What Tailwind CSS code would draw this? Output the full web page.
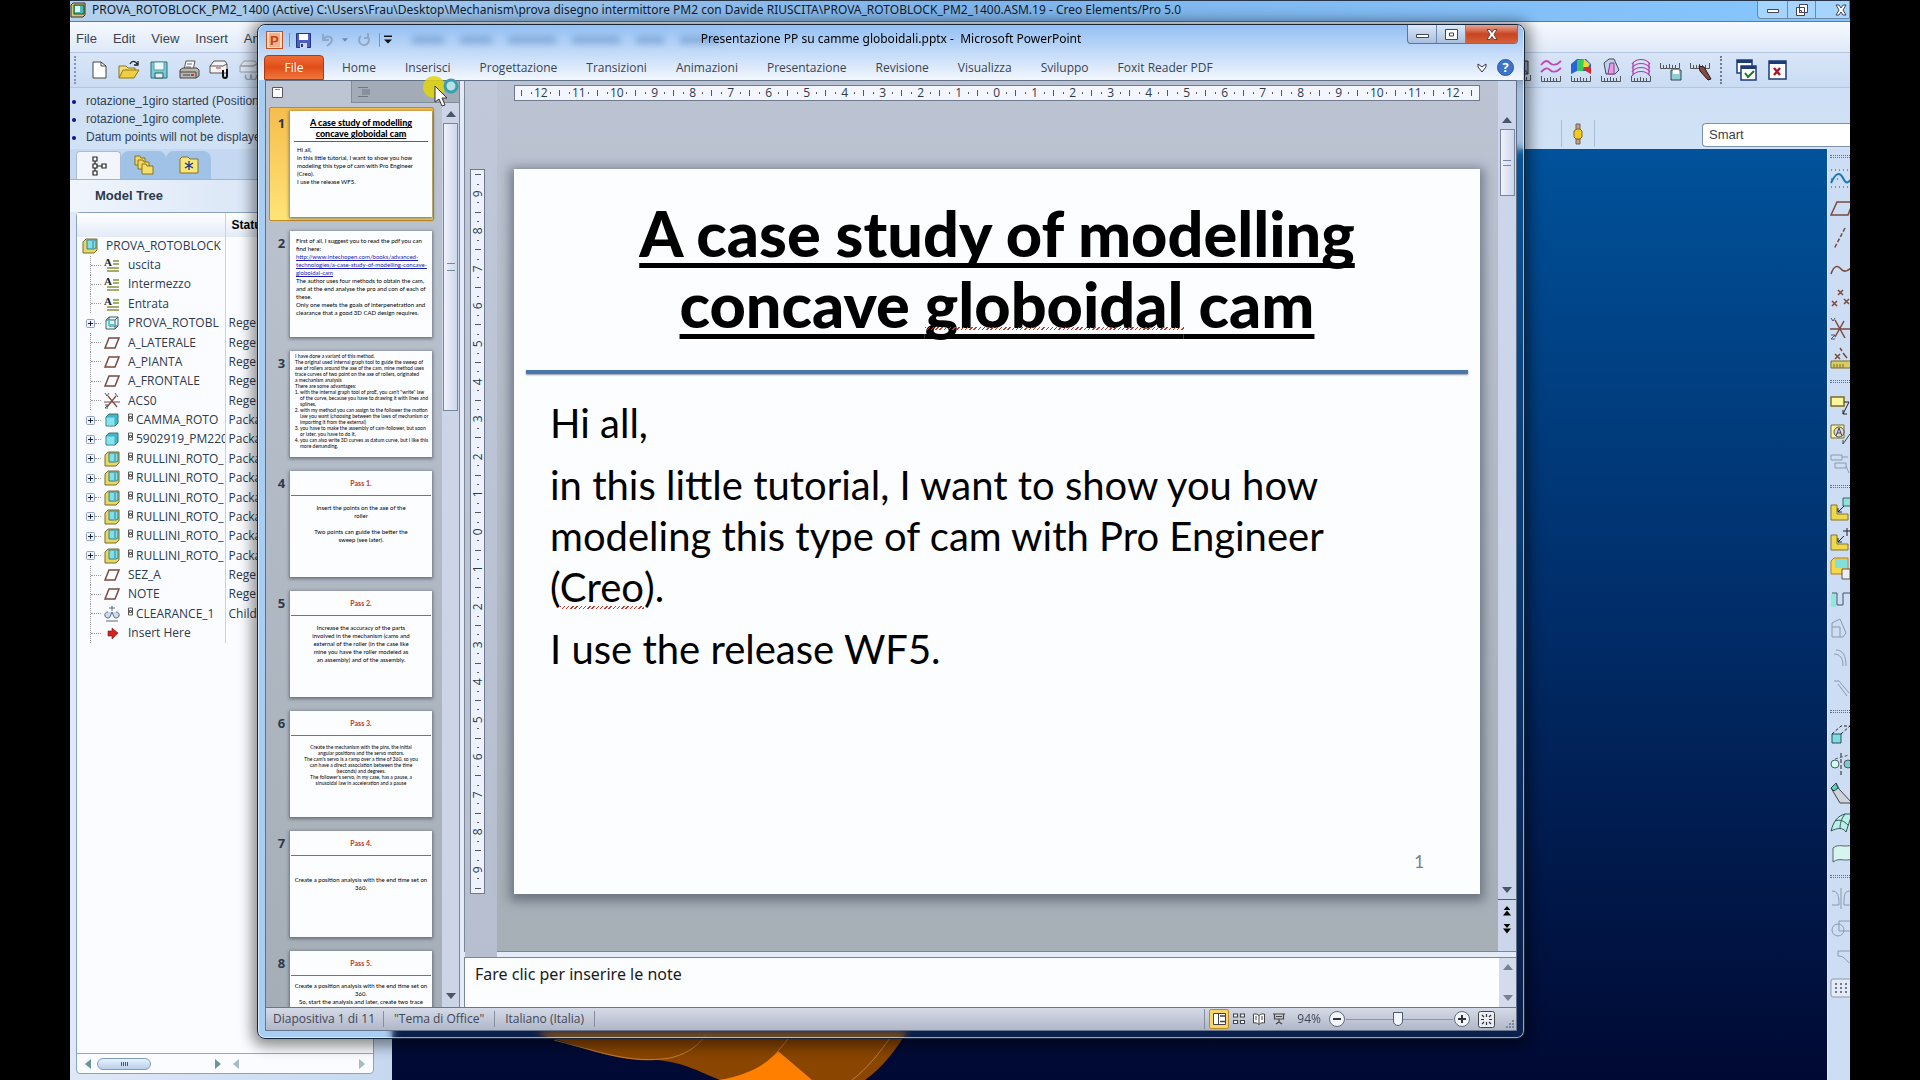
<!DOCTYPE html>
<html lang="it">
<head>
    <meta charset="UTF-8">
    <meta name="viewport" content="width=device-width, initial-scale=1.0">
    <title>Presentazione PP su camme globoidali.pptx - Microsoft PowerPoint</title>
    <script src="https://cdn.jsdelivr.net/npm/@tailwindcss/browser@4"></script>
</head>
<body class="relative h-screen overflow-hidden bg-black px-[70px] font-['Open_Sans',sans-serif] text-xs text-[#2c3a4c]">

    <!-- Shared icons -->
    <svg class="hidden">
        <symbol id="note" viewBox="0 0 16 16"><text x="0" y="9" font-family="Liberation Serif" font-weight="bold" font-size="11" fill="#222">A</text><path d="M9 4h6M9 7h6M3 11h12M3 14h12" stroke="#8a9138" stroke-width="1.5"/></symbol>
        <symbol id="plane" viewBox="0 0 16 16"><path d="M5 3h10l-4 10H1z" fill="none" stroke="#7a4a3a" stroke-width="1.5"/></symbol>
        <symbol id="csys" viewBox="0 0 16 16"><path d="M0 9h16M4 3l9 11M12 3L3 14" stroke="#7a4a3a" stroke-width="1.2"/><path d="M1 0l2 3 2-3M11 0l3 4M1 12h3l-3 3h3" fill="none" stroke="#555"/></symbol>
        <symbol id="part" viewBox="0 0 16 16"><path d="M2 5l3-3h9v9l-3 3H2z" fill="#3fb6cc" stroke="#476" stroke-width="1"/><path d="M2.500 5.500h8v8h-8z" fill="#86e3f0"/></symbol>
        <symbol id="asm" viewBox="0 0 16 16"><path d="M1 4l3-3h11v11l-3 3H1z" fill="#e8d864" stroke="#7b6a28"/><path d="M5 2h9v8l-2 1H5z" fill="#7fe0ec" stroke="#3b7f8a"/><path d="M11 3v7" stroke="#3b7f8a"/></symbol>
        <symbol id="skel" viewBox="0 0 16 16"><path d="M2 5l3-3h9v9l-3 3H2zM2 5h9v9M11 5l3-3M5 2v9h9" fill="#e4fbfd" stroke="#3f5f66"/><path d="M5 5v5h6" fill="none" stroke="#54cbd8" stroke-width="2"/></symbol>
        <symbol id="clear" viewBox="0 0 16 16"><path d="M4 6a3 3 0 1 0 2 5l2-5 2 5a3 3 0 1 0 2-5M5 2h6M8 0v5M2 15h12" fill="#cdd9ee" stroke="#5b6a85"/></symbol>
        <symbol id="here" viewBox="0 0 16 16"><path d="M4 6h4V3l6 5-6 6v-3H4z" fill="#d8201c" stroke="#7d1512" stroke-width=".6"/></symbol>
        <symbol id="plus" viewBox="0 0 9 9"><rect x=".5" y=".5" width="8" height="8" rx="1" fill="#eef2fa" stroke="#8fa4be"/><path d="M2 4.500h5M4.500 2v5" stroke="#223"/></symbol>
        <symbol id="box" viewBox="0 0 6 10"><path d="M.5 1h4v7h-4zM1.500 3.500h2v2h-2z" fill="none" stroke="#444" stroke-width=".9"/></symbol>
        <symbol id="up" viewBox="0 0 10 6"><path d="M0 6L5 0l5 6z" fill="currentColor"/></symbol>
        <symbol id="down" viewBox="0 0 10 6"><path d="M0 0h10L5 6z" fill="currentColor"/></symbol>
        <symbol id="left" viewBox="0 0 6 10"><path d="M6 0v10L0 5z" fill="currentColor"/></symbol>
        <symbol id="right" viewBox="0 0 6 10"><path d="M0 0v10l6-5z" fill="currentColor"/></symbol>
        <symbol id="scale" viewBox="0 0 20 6"><path d="M.5 0v5.500h19V0M3.500 2v3M6.500 2v3M9.500 1v4M12.500 2v3M15.500 2v3" fill="none" stroke="#555"/></symbol>
    </svg>

    <!-- Creo window -->
    <div class="flex h-full flex-col bg-[#cddff5]">
        <header class="flex h-[21px] shrink-0 items-center gap-1.5 overflow-hidden border-t border-[#26364a] bg-linear-to-r from-[#b4d0ec] via-[#7fb4ea] to-[#86c6ff] pb-0.5 text-[#101c2c]">
            <svg class="h-4 w-4 shrink-0" viewBox="0 0 16 16"><path d="M1 3l2-2h12v12l-2 2H1z" fill="#d9c95c" stroke="#334"/><path d="M4 3h10v9H4z" fill="#48bcb8" stroke="#243"/><path d="M5 4h5v6H5z" fill="#dff"/></svg>
            <h1 class="whitespace-nowrap font-['Noto_Sans',sans-serif] text-xs leading-4">PROVA_ROTOBLOCK_PM2_1400 (Active) C:\Users\Frau\Desktop\Mechanism\prova disegno intermittore PM2 con Davide RIUSCITA\PROVA_ROTOBLOCK_PM2_1400.ASM.19 - Creo Elements/Pro 5.0</h1>
            <div class="ml-auto flex h-[18px] w-[93px] shrink-0 divide-x divide-[#6b8aa8] rounded-bl border border-t-0 border-[#6b8aa8] bg-[#a5d4ff]">
                <button aria-label="Minimize" class="flex w-[30px] shrink-0 items-center justify-center"><svg class="h-3 w-3" viewBox="0 0 12 12"><path d="M.5 5.500h11v3H.5z" fill="#fff" stroke="#445"/></svg></button>
                <button aria-label="Restore" class="flex w-[28px] shrink-0 items-center justify-center"><svg class="h-3 w-3" viewBox="0 0 12 12"><path d="M3.500.5h8v8h-8zM.5 3.500h8v8h-8zM3.500 6.500h2v2h-2z" fill="#fff" stroke="#445"/></svg></button>
                <button aria-label="Close" class="flex flex-1 items-center justify-end pr-0.5"><svg class="h-3 w-3" viewBox="0 0 12 12"><path d="M1 1h3l2 3 2-3h3L8 6l3 5H8L6 8l-2 3H1l3-5z" fill="#fff" stroke="#445"/></svg></button>
            </div>
        </header>
        <nav class="flex h-[31px] shrink-0 items-center gap-4 border-t border-[#5c7a9c] bg-linear-to-b from-[#f6f9fe] to-[#dfe9f8] px-1.5 pt-1 font-['Liberation_Sans',sans-serif] text-[13px] text-[#3b4350]">
            <a href="#">File</a><a href="#">Edit</a><a href="#">View</a><a href="#">Insert</a><a href="#">Analysis</a>
        </nav>
        <div class="flex h-9 shrink-0 items-center border-y border-[#b3c6e2] bg-linear-to-b from-[#d9e5f7] to-[#c9dcf4] pr-[62px]">
            <span class="ml-1 h-7 w-1 border-l-2 border-dotted border-[#8496b0]"></span>
            <div class="flex gap-2 pl-2.5">
                <button aria-label="New"><svg class="h-5 w-[22px]" viewBox="0 0 22 20"><path d="M5 2h8l5 4v12H5z" fill="#fff" stroke="#444"/><path d="M13 2v4h5" fill="none" stroke="#444"/></svg></button>
                <button aria-label="Open"><svg class="h-5 w-[22px]" viewBox="0 0 22 20"><path d="M1 18V6h7l2 2h7v3" fill="#f3df7a" stroke="#8a7420"/><path d="M1 18l4-8h16l-5 8z" fill="#f0cf3c" stroke="#8a7420"/><path d="M12 4c2-4 6-3 7 0M20 1v4h-4" fill="none" stroke="#222" stroke-width="1.3"/></svg></button>
                <button aria-label="Save"><svg class="h-5 w-[22px]" viewBox="0 0 22 20"><path d="M3 2h16v16H3z" fill="#74cfd4" stroke="#2b6d77"/><path d="M6 2h10v8H6z" fill="#eef8fa" stroke="#5a9ca4"/><path d="M7 13h8v5H7z" fill="#e6eef0" stroke="#356"/></svg></button>
                <button aria-label="Print"><svg class="h-5 w-[22px]" viewBox="0 0 22 20"><path d="M6 10L8 1h9l-2 9z" fill="#fff" stroke="#555"/><path d="M9 4h5M8 7h5" stroke="#666"/><path d="M2 10l3-2h14l2 2v6l-3 2H2z" fill="#b9b6b0" stroke="#444"/><path d="M2 12h16v6M5 15h7" fill="none" stroke="#444"/><path d="M13 14h3v2h-3z" fill="#c33"/></svg></button>
                <button aria-label="Attach"><svg class="h-5 w-[22px]" viewBox="0 0 22 20"><path d="M2 13V6l4-5h11l2 3v9z" fill="#f4f4f2" stroke="#555"/><path d="M2 6h13l4-2" fill="none" stroke="#555"/><path d="M8 8h5" stroke="#c33"/><path d="M15 10v6a2 2 0 0 0 4 0V9" fill="none" stroke="#111" stroke-width="2"/></svg></button>
                <button aria-label="Link"><svg class="h-5 w-[22px] opacity-60" viewBox="0 0 22 20"><path d="M2 12V6l4-5h11l2 3v8z" fill="#e8ecf2" stroke="#777"/><path d="M2 6h13l4-2M8 15a3 3 0 1 0 5 0 3 3 0 1 0 5 0" fill="none" stroke="#777" stroke-width="1.500"/></svg></button>
            </div>
            <div class="ml-auto flex items-center gap-2">
                <button aria-label="Mesh"><svg class="h-6 w-[22px]" viewBox="0 0 22 24"><path d="M2 16L8 3h10v13zM8 3l10 13" fill="#aab" stroke="#334"/><use href="#scale" x="1" y="17" width="20" height="6"/></svg></button>
                <button aria-label="Curve analysis"><svg class="h-6 w-[22px]" viewBox="0 0 22 24"><path d="M1 7c5-6 7-4 9-2s6 3 11-2M1 14c5-5 7-4 9-2s6 3 11-2" fill="none" stroke="#c04ab4" stroke-width="1.800"/><use href="#scale" x="1" y="18" width="20" height="6"/></svg></button>
                <button aria-label="Shading"><svg class="h-6 w-[22px]" viewBox="0 0 22 24"><path d="M1 16V6l6-5h9l5 5v10l-5-3H7z" fill="#2b62d8"/><path d="M7 2l8-1-2 12H7z" fill="#37c95a"/><path d="M14 1l6 5-3 5-4-1z" fill="#f0d52c"/><path d="M13 9h8v7l-5-3z" fill="#d92a2a"/><use href="#scale" x="1" y="18" width="20" height="6"/></svg></button>
                <button aria-label="Draft"><svg class="h-6 w-[22px]" viewBox="0 0 22 24"><path d="M4 5l5-4h5l5 11-4 4H6z" fill="#bcd4ea" stroke="#445"/><path d="M10 5h4v11l-6 0z" fill="#e79ae2" stroke="#933a8f"/><use href="#scale" x="1" y="18" width="20" height="6"/></svg></button>
                <button aria-label="Sections"><svg class="h-6 w-[22px]" viewBox="0 0 22 24"><path d="M2 6c4-6 14-6 18 0M2 10c4-6 14-6 18 0M2 14c4-6 14-6 18 0M2 18c4-6 14-6 18 0M3 5v12M19 5v12" fill="none" stroke="#b43aa8" stroke-width="1.200"/><use href="#scale" x="1" y="18" width="20" height="6"/></svg></button>
                <button aria-label="Save measure"><svg class="h-6 w-[22px]" viewBox="0 0 22 24"><use href="#scale" x="0" y="5" width="20" height="6"/><path d="M11 12h10v10H11z" fill="#8fcdd0" stroke="#345"/><path d="M13 12h6v4h-6z" fill="#fff"/></svg></button>
                <button aria-label="Edit measure"><svg class="h-6 w-[22px]" viewBox="0 0 22 24"><use href="#scale" x="0" y="5" width="20" height="6"/><path d="M9 8l5 1 7 12-3 1-8-9z" fill="#7c5040" stroke="#311"/></svg></button>
                <span class="h-7 w-2 border-l-2 border-dotted border-[#6c7c92]"></span>
                <button aria-label="Accept window"><svg class="h-6 w-[22px]" viewBox="0 0 22 24"><path d="M1 2h15v13H1z" fill="#fff" stroke="#1c3c78" stroke-width="1.500"/><path d="M1 2h15v3H1z" fill="#1c3c78"/><path d="M5 8h15v14H5z" fill="#fff" stroke="#1c3c78" stroke-width="1.500"/><path d="M5 8h15v3H5z" fill="#1c3c78"/><path d="M9 15l3 4 6-6" fill="none" stroke="#167a22" stroke-width="2"/></svg></button>
                <button aria-label="Close window"><svg class="h-6 w-[22px]" viewBox="0 0 22 24"><path d="M3 3h17v18H3z" fill="#fff" stroke="#1c3c78" stroke-width="1.500"/><path d="M3 3h17v3H3z" fill="#1c3c78"/><path d="M8 10l6 7M14 10l-6 7" stroke="#a8152a" stroke-width="2.400"/></svg></button>
            </div>
        </div>
        <div class="flex h-[61px] shrink-0 justify-between bg-linear-to-b from-[#cfdff5] to-[#d0e2f6]">
            <ul class="list-disc pt-1 pl-4 font-['Liberation_Sans',sans-serif] text-xs leading-[18px] text-[#2f3f55] marker:text-[#1010a0]">
                <li>rotazione_1giro started (Position</li>
                <li>rotazione_1giro complete.</li>
                <li>Datum points will not be displayed</li>
            </ul>
            <div class="flex items-end pb-0.5">
                <div class="mr-[107px] flex h-[27px] w-[34px] items-center justify-center border-x border-[#a8bcd8]">
                    <button aria-label="Model display"><svg class="h-[22px] w-3" viewBox="0 0 12 22"><path d="M4 1h4v6H4zM4 16h4v5H4z" fill="#c98" stroke="#665"/><path d="M2 8l3-2h3l2 2v6l-2 2H4l-2-2z" fill="#f2c92a" stroke="#8a6410"/></svg></button>
                </div>
                <select aria-label="Selection filter" class="h-6 w-[148px] appearance-none rounded-l border border-r-0 border-[#7b93b0] bg-white px-1.5 font-['Liberation_Sans',sans-serif] text-[13px] text-[#3b4350]"><option>Smart</option></select>
            </div>
        </div>
        <div class="flex min-h-0 flex-1">
            <aside class="flex w-[322px] shrink-0 flex-col bg-linear-to-r from-[#dfe8f6] to-[#c6d8f0] pb-1.5">
                <div class="flex h-[31px] items-end border-b border-[#9fb4d2] bg-[#c4d8f1] pl-1.5">
                    <button aria-label="Model tree" class="flex h-7 w-[45px] items-center justify-center rounded-t border border-b-0 border-[#a8bcd8] bg-[#f2f6fc]"><svg class="h-5 w-4" viewBox="0 0 16 20"><path d="M2 1h4v4H2zM2 8h4v4H2zM2 15h4v4H2zM11 8h4v4h-4zM4 5v3M4 12v3M6 10h5" fill="#fff" stroke="#222" stroke-width="1.200"/></svg></button>
                    <button aria-label="Folders" class="flex h-7 w-[45px] items-center justify-center rounded-t-lg bg-[#9fc2e6]"><svg class="h-5 w-5" viewBox="0 0 20 20"><path d="M1 1h5l1 2h4v7H1z" fill="#f0d95c" stroke="#8a7420"/><path d="M4 5h5l1 2h5v7H4z" fill="#f0d95c" stroke="#8a7420"/><path d="M8 9h4l1 2h6v8H8z" fill="#f4df6a" stroke="#8a7420"/></svg></button>
                    <button aria-label="Favorites" class="flex h-7 w-[45px] items-center justify-center rounded-t-lg bg-[#9fc2e6]"><svg class="h-5 w-5" viewBox="0 0 20 20"><path d="M1 4l2-2h6l2 2h8v14H1z" fill="#f6e67a" stroke="#8a7420"/><path d="M10 6v9M6 8l8 5M14 8l-8 5" stroke="#22328c" stroke-width="1.300"/></svg></button>
                </div>
                <h2 class="bg-linear-to-r from-[#f0f5fc] to-[#c9dbf2] py-1.5 pl-[25px] font-['Liberation_Sans',sans-serif] text-[13px] leading-5 font-bold">Model Tree</h2>
                <div class="ml-1.5 flex w-[298px] flex-1 flex-col rounded border border-[#8aa2bf] bg-[#fbfcff]">
                    <div class="flex flex-1">
                        <table class="h-[430px] w-full table-fixed text-left">
                            <thead>
                                <tr class="h-6 bg-linear-to-b from-white to-[#e3ebf7] font-['Liberation_Sans',sans-serif] text-xs font-bold text-black"><th class="w-[148px] border-r border-[#c9d2e0]"></th><th class="pl-1.5">Status</th></tr>
                            </thead>
                            <tbody id="tree"></tbody>
                        </table>
                    </div>
                    <div class="flex h-5 items-center border-t border-[#9aa8ba] px-2 text-[#6d9299]">
                        <svg class="h-2.5 w-1.5"><use href="#left"/></svg>
                        <div class="ml-1.5 flex h-3 w-[54px] items-center justify-center gap-px rounded-full border border-[#7f9cc0] bg-linear-to-b from-[#e9f2fd] to-[#b9cfe8]">
                            <span class="h-1 w-px bg-[#556]"></span><span class="h-1 w-px bg-[#556]"></span><span class="h-1 w-px bg-[#556]"></span><span class="h-1 w-px bg-[#556]"></span>
                        </div>
                        <svg class="ml-16 h-2.5 w-1.5"><use href="#right"/></svg>
                        <svg class="ml-3 h-2.5 w-1.5 opacity-60"><use href="#left"/></svg>
                        <svg class="ml-auto h-2.5 w-1.5 opacity-60"><use href="#right"/></svg>
                    </div>
                </div>
            </aside>
            <main class="relative flex-1 bg-linear-to-b from-[#00529b] via-[#002d69] to-[#000933]">
                <svg class="absolute bottom-0 left-[148px] h-[50px] w-[380px]" viewBox="0 0 380 50">
                    <path d="M0 0H368C356 20 342 38 325 50H180C160 42 145 33 118 30C75 33 40 15 0 5z" fill="#8a4500"/>
                    <path d="M178 50C205 46 225 36 238 21L272 50z" fill="#ff8000"/>
                    <path d="M14 10C60 22 90 34 130 28C150 23 158 15 166 5M238 21L248 9M312 50C328 38 340 22 350 8" fill="none" stroke="#d49a52" stroke-width=".7"/>
                </svg>
            </main>
            <aside class="w-[23px] shrink-0 overflow-hidden border-l border-[#e4eefa] bg-[#ccddf4] pl-0.5">
                <div id="featureBar" class="flex w-6 flex-col"></div>
            </aside>
        </div>
    </div>

    <!-- PowerPoint window -->
    <section class="absolute top-6 right-[395px] bottom-[41px] left-[257px] flex flex-col rounded-lg border border-[#16263a] bg-[linear-gradient(to_right,#a9cef4_0,#a9cef4_126px,#2a5a8a40_136px,#2a5a8a40_100%)] px-[7px] pb-[7px] shadow-[0_2px_14px_5px_rgba(0,0,0,0.45)] backdrop-blur-xs inset-ring inset-ring-white/60">
        <div class="-mx-1.5 h-[55px] shrink-0 rounded-t-lg bg-linear-to-b from-[#93bff3] via-[#c3daf8] to-[#f3f7fd] px-[5px]">
            <div class="relative flex h-[30px] items-center text-black">
                <svg class="ml-0.5 h-[18px] w-[17px]" viewBox="0 0 17 18"><rect x=".5" y=".5" width="16" height="17" fill="#f7dccb" stroke="#c4501c"/><path d="M3 2h11v14H3z" fill="#f3b08a"/><text x="4" y="14" font-family="Liberation Sans" font-weight="bold" font-size="13" fill="#c4440c">P</text></svg>
                <span class="mx-1.5 h-3.5 w-px bg-[#7896bc]"></span>
                <button aria-label="Salva"><svg class="mr-1 h-[15px] w-[15px]" viewBox="0 0 15 15"><path d="M.5.5h14v14H.5z" fill="#4a5fc4" stroke="#25357c"/><path d="M3 1h9v6H3z" fill="#fff"/><path d="M4 10h7v5H4z" fill="#cfd6ee"/><path d="M5 11h2v3H5z" fill="#25357c"/></svg></button>
                <button aria-label="Annulla"><svg class="ml-1.5 h-[15px] w-[13px]" viewBox="0 0 13 15"><path d="M2 1v6h6M2 7c3-5 9-4 9 0 0 3-3 4-5 6" fill="none" stroke="#8ea6c8" stroke-width="2"/></svg></button>
                <svg class="ml-2 h-1 w-1.5 text-[#7189ad]"><use href="#down"/></svg>
                <button aria-label="Ripeti"><svg class="ml-2.5 h-[14px] w-[13px]" viewBox="0 0 13 14"><path d="M3 3a5 5 0 1 0 7 1M10 0v5H6" fill="none" stroke="#8ea6c8" stroke-width="2"/></svg></button>
                <span class="mr-1 ml-2 h-3.5 w-px bg-[#7896bc]"></span>
                <svg class="h-2.5 w-2" viewBox="0 0 8 9"><path d="M0 0h8v1.500H0zM0 4h8L4 8z" fill="#111"/></svg>
                <div class="ml-5 flex gap-4 blur-[3px]">
                    <span class="h-2 w-8 bg-[#4f7db4]/40"></span><span class="h-2 w-8 bg-[#4f7db4]/40"></span><span class="h-2 w-12 bg-[#4f7db4]/40"></span><span class="h-2 w-12 bg-[#4f7db4]/40"></span><span class="h-2 w-7 bg-[#4f7db4]/40"></span><span class="h-2 w-10 bg-[#4f7db4]/40"></span>
                </div>
                <h2 class="absolute inset-x-0 bottom-2 text-center font-['Noto_Sans',sans-serif] text-xs">Presentazione PP su camme globoidali.pptx - &nbsp;Microsoft PowerPoint</h2>
                <div class="ml-auto flex h-[19px] divide-x divide-[#6f87a8] self-start overflow-hidden rounded-b border border-t-0 border-[#5e7696] bg-linear-to-b from-[#dbe8f8] to-[#a9c0de]">
                    <button aria-label="Riduci a icona" class="flex w-[29px] items-center justify-center"><svg class="h-3 w-[13px]" viewBox="0 0 13 12"><path d="M.5 6.500h12v3H.5z" fill="#fff" stroke="#445"/></svg></button>
                    <button aria-label="Ingrandisci" class="flex w-[29px] items-center justify-center"><svg class="h-[11px] w-[13px]" viewBox="0 0 13 11"><path d="M.5.5h12v10H.5zM4.500 4h4v3h-4z" fill="#fff" stroke="#445"/></svg></button>
                    <button aria-label="Chiudi" class="flex w-[51px] items-center justify-center bg-linear-to-b from-[#e3a48f] via-[#c9431f] to-[#d4623a]"><svg class="h-[11px] w-3" viewBox="0 0 12 11"><path d="M1 .5h3l2 3 2-3h3L8 5.500l3 5H8l-2-3-2 3H1l3-5z" fill="#fff" stroke="#644"/></svg></button>
                </div>
            </div>
            <nav class="flex h-[25px] items-center text-[#3a4452]">
                <a href="#" class="mr-[18px] flex h-full w-[60px] items-center justify-center rounded-t-sm border border-[#a93c10] bg-linear-to-b from-[#ee6b34] via-[#e04e16] to-[#f0763c] text-white">File</a>
                <div class="flex gap-[29px]">
                    <a href="#">Home</a><a href="#">Inserisci</a><a href="#">Progettazione</a><a href="#">Transizioni</a><a href="#">Animazioni</a><a href="#">Presentazione</a><a href="#">Revisione</a><a href="#">Visualizza</a><a href="#">Sviluppo</a><a href="#">Foxit Reader PDF</a>
                </div>
                <button aria-label="Riduci barra multifunzione" class="ml-auto"><svg class="h-2.5 w-2.5" viewBox="0 0 10 10"><path d="M1 1l4 3 4-3v3L5 9 1 4z" fill="#fff" stroke="#334"/></svg></button>
                <button aria-label="Guida" class="mr-1 ml-2.5 flex h-[17px] w-[17px] items-center justify-center rounded-full border border-[#2a5aa8] bg-[#3b74c8] text-[13px] font-bold text-white">?</button>
            </nav>
        </div>

        <div class="flex min-h-0 flex-1 border-x border-t border-[#5f6f86] bg-[#e4ebf8]">
            <!-- Slide list -->
            <aside class="flex w-[194px] shrink-0 flex-col border-r border-[#7b8798] bg-linear-to-b from-[#bdc5d2] to-[#a5adb6]">
                <div class="flex h-[22px] shrink-0">
                    <button aria-label="Diapositive" class="flex w-[85px] items-center pl-1.5"><svg class="h-[11px] w-[11px]" viewBox="0 0 11 11"><path d="M.5.5h10v10H.5z" fill="#fff" stroke="#556"/><path d="M3 2.500h5" stroke="#88a"/></svg></button>
                    <button aria-label="Struttura" class="flex flex-1 items-center border-b border-l border-[#818c9c] bg-[#a3abb6] pl-1.5"><svg class="h-2.5 w-3" viewBox="0 0 12 10"><path d="M0 .5h10M4 3h8M4 5h8M4 7h8M0 9.500h10" stroke="#6d7683"/></svg></button>
                </div>
                <div class="flex min-h-0 flex-1">
                    <ol id="thumbs" class="flex flex-1 flex-col gap-1.5 overflow-hidden pt-1 pr-2 pl-[3px]"></ol>
                    <div class="flex w-[17px] flex-col items-center bg-[#ccd5e8] py-2 text-[#4a5568]">
                        <svg class="h-1.5 w-2.5 shrink-0"><use href="#up"/></svg>
                        <div class="mt-1.5 flex h-72 w-[15px] shrink-0 items-center justify-center border border-[#77879e] bg-linear-to-r from-[#f0f3fc] to-[#cdd6ea]"><span class="h-2 w-2 border-y border-[#77879e]"></span></div>
                        <svg class="mt-auto h-1.5 w-2.5 shrink-0"><use href="#down"/></svg>
                    </div>
                </div>
            </aside>

            <!-- Editing area -->
            <div class="ml-1 flex min-w-0 flex-1 flex-col">
                <div class="flex min-h-0 flex-1 border-b border-l border-[#7b8798]">
                    <div class="grid flex-1 grid-cols-[32px_1fr] grid-rows-[20px_auto_1fr] gap-y-[68px] bg-linear-to-b from-[#bcc4d3] to-[#a6aeb6]">
                        <div class="row-span-3 flex flex-col bg-linear-to-b from-[#c0c8da] to-[#b7bed0] pt-[88px] pl-[5px]">
                            <div id="vRuler" class="flex h-[725px] w-[15px] flex-col overflow-hidden border border-[#6f7a8e] bg-[#eef2fc] text-xs"></div>
                        </div>
                        <div class="pt-1 pr-[18px] pl-[17px]">
                            <div id="hRuler" class="flex h-4 overflow-hidden border border-[#6f7a8e] bg-[#f3f6fe] px-0.5 text-xs"></div>
                        </div>
                        <div class="pr-[18px] pl-[17px]">
                            <article class="relative aspect-[4/3] bg-[#fcfdff] px-3 font-[Lato,sans-serif] text-black shadow-[0_3px_10px_4px_rgba(60,70,85,0.55)]">
                                <h1 class="pt-7 text-center text-[63px] leading-[71px] font-black underline decoration-[5px] underline-offset-[6px] [text-decoration-skip-ink:none]">A case study of modelling<br>concave <span class="relative">globoidal<span class="absolute inset-x-0 bottom-[11px] h-[3px] bg-[repeating-linear-gradient(135deg,#c0392b_0_1px,transparent_1px_3px)]"></span></span> cam</h1>
                                <div class="mt-[31px] h-1 bg-[#4a76aa] shadow-[0_1px_2px_#8a96a8]"></div>
                                <div class="space-y-[11px] pt-6 pl-6 text-[40px] leading-[51px]">
                                    <p>Hi all,</p>
                                    <p>in this little tutorial, I want to show you how<br>modeling this type of cam with Pro Engineer<br>(<span class="relative">Creo<span class="absolute inset-x-0 bottom-0.5 h-[3px] bg-[repeating-linear-gradient(135deg,#c0392b_0_1px,transparent_1px_3px)]"></span></span>).</p>
                                    <p>I use the release WF5.</p>
                                </div>
                                <span class="absolute right-[56px] bottom-5 text-[17px] text-[#7c7f84]">1</span>
                            </article>
                        </div>
                    </div>
                    <div class="flex w-[18px] shrink-0 flex-col items-center bg-[#ccd6ea] text-[#4a5568]">
                        <svg class="mt-9 h-1.5 w-2.5"><use href="#up"/></svg>
                        <div class="mt-1.5 flex h-[67px] w-[15px] items-center justify-center border border-[#77879e] bg-linear-to-r from-[#f0f3fc] to-[#cdd6ea]"><span class="h-1.5 w-2 border-y border-[#77879e]"></span></div>
                        <svg class="mt-auto h-1.5 w-2.5"><use href="#down"/></svg>
                        <div class="mt-1.5 flex h-[52px] w-full flex-col items-center border-t border-[#4a5c80] pt-1.5 text-black">
                            <svg class="h-1 w-2"><use href="#up"/></svg><svg class="h-1.5 w-2"><use href="#up"/></svg>
                            <svg class="mt-2 h-1 w-2"><use href="#down"/></svg><svg class="h-1.5 w-2"><use href="#down"/></svg>
                        </div>
                    </div>
                </div>
                <div class="mt-[5px] flex h-[50px] shrink-0 border-t border-l border-[#7b8798] bg-[#fcfdff]">
                    <textarea aria-label="Note" placeholder="Fare clic per inserire le note" class="flex-1 resize-none px-2.5 pt-1 font-['Noto_Sans',sans-serif] text-base placeholder:text-[#1a1a1a]"></textarea>
                    <div class="flex w-[17px] flex-col items-center justify-between bg-[#d3dbec] py-1.5 text-[#77828f]">
                        <svg class="h-1.5 w-2.5"><use href="#up"/></svg><svg class="h-1.5 w-2.5"><use href="#down"/></svg>
                    </div>
                </div>
            </div>
        </div>

        <!-- Status bar -->
        <footer class="flex h-6 shrink-0 items-center border border-[#68778e] bg-linear-to-b from-[#d5dae8] to-[#b0b7c6] text-[#3f4857]">
            <span class="border-r border-[#858fa1] pr-2 pl-[7px]">Diapositiva 1 di 11</span>
            <span class="border-r border-[#858fa1] px-2.5">"Tema di Office"</span>
            <span class="border-r border-[#858fa1] px-2.5">Italiano (Italia)</span>
            <div class="ml-auto flex items-center border-l border-[#858fa1] pl-1">
                <button aria-label="Normale" class="flex h-5 w-5 items-center justify-center rounded-xs border border-[#b88a2c] bg-[#f8d66c]"><svg class="h-3 w-[13px]" viewBox="0 0 13 12"><path d="M.5.5h12v11H.5zM5.500.5v11" fill="#fff" stroke="#444"/><path d="M7 3h5M7 8.500h5" stroke="#444" stroke-width="1.500"/></svg></button>
                <button aria-label="Sequenza diapositive" class="flex h-5 w-5 items-center justify-center"><svg class="h-3 w-3" viewBox="0 0 12 12"><path d="M.5 1h4v3h-4zM7.500 1h4v3h-4zM.5 7.500h4v3h-4zM7.500 7.500h4v3h-4z" fill="#fff" stroke="#444" stroke-width="1.200"/></svg></button>
                <button aria-label="Lettura" class="flex h-5 w-5 items-center justify-center"><svg class="h-3 w-3" viewBox="0 0 12 12"><path d="M6 2.500C4 .5 2 1 .5 1v9C2 9.500 4 9.500 6 11.500 8 9.500 10 9.500 11.500 10V1C10 1 8 .5 6 2.500zM6 2.500v9M2 4h2M2 6h2M8 4h2M8 6h2" fill="#fff" stroke="#444"/></svg></button>
                <button aria-label="Presentazione" class="flex h-5 w-5 items-center justify-center"><svg class="h-3 w-3" viewBox="0 0 12 12"><path d="M0 1h12M1.500 1v5h9V1M6 6v3M3 11l3-2 3 2M3 3.500h6" fill="none" stroke="#444" stroke-width="1.200"/></svg></button>
                <span class="px-2 text-xs">94%</span>
                <button aria-label="Riduci" class="flex h-4 w-4 items-center justify-center rounded-full border border-[#5f6a7c] bg-[#f2f5fb]"><span class="h-0.5 w-2 bg-[#333]"></span></button>
                <input type="range" aria-label="Zoom" min="0" max="100" value="48" class="mx-px h-3.5 w-[107px] appearance-none bg-[linear-gradient(#8a93a4,#8a93a4)] bg-[length:100%_1px] bg-center bg-no-repeat [&::-webkit-slider-thumb]:h-3.5 [&::-webkit-slider-thumb]:w-2.5 [&::-webkit-slider-thumb]:appearance-none [&::-webkit-slider-thumb]:rounded-b-full [&::-webkit-slider-thumb]:border [&::-webkit-slider-thumb]:border-[#4f5a6c] [&::-webkit-slider-thumb]:bg-[#f2f5fb]">
                <button aria-label="Aumenta" class="relative flex h-4 w-4 items-center justify-center rounded-full border border-[#5f6a7c] bg-[#f2f5fb]"><span class="h-0.5 w-2 bg-[#333]"></span><span class="absolute h-2 w-0.5 bg-[#333]"></span></button>
                <button aria-label="Adatta" class="mr-2.5 ml-2"><svg class="h-[17px] w-[17px]" viewBox="0 0 17 17"><rect x=".5" y=".5" width="16" height="16" rx="2" fill="#e9edf5" stroke="#444"/><path d="M8.500 3v3M8.500 11v3M3 8.500h3M11 8.500h3M4 4l2 2M13 4l-2 2M4 13l2-2M13 13l-2-2" stroke="#333" stroke-width="1.200"/></svg></button>
                <svg class="mr-px h-2.5 w-2.5 self-end" viewBox="0 0 10 10"><path d="M7 1h2v2H7zM4 4h2v2H4zM7 4h2v2H7zM1 7h2v2H1zM4 7h2v2H4zM7 7h2v2H7z" fill="#7d899b"/></svg>
            </div>
        </footer>
    </section>

    <!-- Pointer -->
    <svg class="absolute top-[76px] left-[422px] h-8 w-10" viewBox="0 0 40 32">
        <circle cx="12" cy="11" r="11" fill="#e2d40c" opacity=".85"/>
        <circle cx="29" cy="10" r="6" fill="#b9e2e6" stroke="#3b9fae" stroke-width="3"/>
        <path d="M13 10v16l4-3 3 7 3-1-3-7h5z" fill="#fff" stroke="#333"/>
    </svg>

    <script>
        const treeRows = [
            ['asm', 'PROVA_ROTOBLOCK', ''],
            ['note', 'uscita', ''],
            ['note', 'Intermezzo', ''],
            ['note', 'Entrata', ''],
            ['skel', 'PROVA_ROTOBL', 'Rege', 1],
            ['plane', 'A_LATERALE', 'Rege'],
            ['plane', 'A_PIANTA', 'Rege'],
            ['plane', 'A_FRONTALE', 'Rege'],
            ['csys', 'ACS0', 'Rege'],
            ['part', 'CAMMA_ROTO', 'Packa', 1, 1],
            ['part', '5902919_PM220', 'Packa', 1, 1],
            ['asm', 'RULLINI_ROTO_', 'Packa', 1, 1],
            ['asm', 'RULLINI_ROTO_', 'Packa', 1, 1],
            ['asm', 'RULLINI_ROTO_', 'Packa', 1, 1],
            ['asm', 'RULLINI_ROTO_', 'Packa', 1, 1],
            ['asm', 'RULLINI_ROTO_', 'Packa', 1, 1],
            ['asm', 'RULLINI_ROTO_', 'Packa', 1, 1],
            ['plane', 'SEZ_A', 'Rege'],
            ['plane', 'NOTE', 'Rege'],
            ['clear', 'CLEARANCE_1', 'Child', 0, 1],
            ['here', 'Insert Here', ''],
        ];

        document.getElementById('tree').innerHTML = treeRows.map(([icon, name, status, plus, box], i) => `
            <tr>
                <td class="overflow-hidden border-r border-[#c9d2e0] p-0">
                    <div class="flex items-center whitespace-nowrap leading-[18px]">
                        ${i ? `<span class="ml-[9px] flex h-[19px] w-[18px] shrink-0 items-center">${plus
                            ? '<svg class="h-[9px] w-[9px]"><use href="#plus"/></svg><span class="w-1.5 border-t border-dotted border-[#999]"></span>'
                            : '<span class="ml-1 h-full border-l border-dotted border-[#999]"></span><span class="w-2.5 border-t border-dotted border-[#999]"></span>'}</span>` : '<span class="w-[5px] shrink-0"></span>'}
                        <svg class="mr-2 h-4 w-4 shrink-0"><use href="#${icon}"/></svg>
                        ${box ? '<svg class="mr-0.5 mb-1 h-2.5 w-1.5 shrink-0"><use href="#box"/></svg>' : ''}${name}
                    </div>
                </td>
                <td class="p-0 pl-[3px]">${status}</td>
            </tr>`).join('');

        // One cell per quarter unit: tick, dot, number, dot
        function rulerCells(max, numClass, tickClass, dotClass) {
            let html = '';
            for (let n = -max; n <= max; n++) {
                html += `<span class="${tickClass}"></span><span class="${dotClass}"></span><span class="${numClass}">${Math.abs(n)}</span><span class="${dotClass}"></span>`;
            }
            return html + `<span class="${tickClass}"></span>`;
        }
        const hCell = 'flex min-w-0 flex-1 items-center justify-center leading-none ';
        const vCell = 'flex min-h-0 flex-1 items-center justify-center leading-none ';
        document.getElementById('hRuler').innerHTML = rulerCells(12, hCell,
            hCell + 'before:h-1.5 before:w-px before:bg-[#556]', hCell + 'before:h-0.5 before:w-px before:bg-[#556]');
        document.getElementById('vRuler').innerHTML = rulerCells(9, vCell + '-rotate-90',
            vCell + 'before:h-px before:w-1.5 before:bg-[#556]', vCell + 'before:h-px before:w-0.5 before:bg-[#556]');

        const pass = (n, body) => `
            <h3 class="pt-2 text-center text-[7px] leading-2 font-bold text-[#c0392b]">Pass ${n}.</h3>
            <hr class="mx-px mt-2 border-[#77785e]">${body}`;
        const slides = [
            `<h3 class="pt-1.5 text-center text-[9px] leading-[11px] font-black underline">A case study of modelling<br>concave globoidal cam</h3>
             <hr class="mx-1 mt-0.5 border-[#3f6796]">
             <p class="mt-1 px-[7px] text-[6px] leading-[8px] whitespace-nowrap">Hi all,<br>in this little tutorial, I want to show you how<br>modeling this type of cam with Pro Engineer<br>(Creo).<br>I use the release WF5.</p>`,
            `<p class="px-[6px] pt-1.5 text-[6px] leading-[8px] whitespace-nowrap">First of all, I suggest you to read the pdf you can<br>find here:<br><a href="#" class="text-[#1a1ab8] underline">http://www.intechopen.com/books/advanced-<br>technologies/a-case-study-of-modelling-concave-<br>globoidal-cam</a><br>The author uses four methods to obtain the cam,<br>and at the end analyse the pro and con of each of<br>these.<br>Only one meets the goals of interpenetration and<br>clearance that a good 3D CAD design requires.</p>`,
            `<p class="px-[5px] pt-0.5 text-[5px] leading-[6px] whitespace-nowrap">I have done a variant of this method.<br>The original used internal graph tool to guide the sweep of<br>axe of rollers around the axe of the cam, mine method uses<br>trace curves of two point on the axe of rollers, originated<br>a mechanism analysis<br>There are some advantages:</p>
             <ol class="list-decimal pr-1 pl-[10px] text-[5px] leading-[6px] whitespace-nowrap"><li>with the internal graph tool of proE, you can't "write" law<br>of the curve, because you have to drawing it with lines and<br>splines,</li><li>with my method you can assign to the follower the motion<br>law you want (choosing between the laws of mechanism or<br>importing it from the external)</li><li>you have to make the assembly of cam-follower, but soon<br>or later, you have to do it,</li><li>you can also write 3D curves as datum curve, but I like this<br>more demanding.</li></ol>`,
            pass(1, '<p class="mt-2 text-center text-[6px] leading-[8px]">Insert the points on the axe of the<br>roller<br><br>Two points can guide the better the<br>sweep (see later).</p>'),
            pass(2, '<p class="mt-2 text-center text-[6px] leading-[8px]">Increase the accuracy of the parts<br>involved in the mechanism (cams and<br>external of the roller (in the case like<br>mine you have the roller modeled as<br>an assembly) and of the assembly.</p>'),
            pass(3, '<p class="mt-2 text-center text-[5px] leading-[6px]">Create the mechanism with the pins, the initial<br>angular positions and the servo motors.<br>The cam\'s servo is a ramp over a time of 360, so you<br>can have a direct association between the time<br>(seconds) and degrees.<br>The follower\'s servo, in my case, has a pause, a<br>sinusoidal law in acceleration and a pause</p>'),
            pass(4, '<p class="mt-5 text-center text-[6px] leading-[8px]">Create a position analysis with the end time set on<br>360.</p>'),
            pass(5, '<p class="mt-1.5 text-center text-[6px] leading-[8px]">Create a position analysis with the end time set on<br>360.<br>So, start the analysis and later, create two trace</p>'),
        ];
        document.getElementById('thumbs').innerHTML = slides.map((html, i) => `
            <li class="flex h-[114px] shrink-0 rounded-xs border p-[3px] ${i ? 'border-transparent' : 'border-[#c58a1c] bg-linear-to-b from-[#f6bd4c] to-[#ffe477]'}">
                <span class="w-[17px] shrink-0 pt-1 text-center text-[13px] leading-4 font-bold">${i + 1}</span>
                <div class="h-[106px] w-[142px] shrink-0 overflow-hidden bg-[#fcfdff] font-[Lato,sans-serif] text-black shadow-[0_1px_3px_1px_rgba(60,70,85,0.6)]">${html}</div>
            </li>`).join('');

        const sep = '<span class="my-[6px] h-[3px] shrink-0 border-y border-dotted border-[#5c6f8c]"></span>';
        const brown = 'fill="none" stroke="#7a4a3a" stroke-width="1.5"';
        const gray = 'fill="none" stroke="#8d99ad"';
        const features = [
            '<path d="M1 12h2M7 12h2M13 12h2M1 3h22M1 20h22" stroke="#246" stroke-dasharray="1 3"/><path d="M1 16C6 5 10 5 13 11s5 6 9 0" fill="none" stroke="#1678b8" stroke-width="2"/>',
            `<path d="M7 5h16l-5 13H1z" ${brown}/>`,
            `<path d="M15 1L4 22" stroke-dasharray="4 2" ${brown}/>`,
            `<path d="M1 17c3-9 7-9 10-5s7 2 12-3" ${brown}/>`,
            `<path d="M8 3l5 5M13 3L8 8M2 14l5 5M7 14l-5 5M14 12l5 5M19 12l-5 5" ${brown}/>`,
            `<path d="M0 12h22M5 3l10 18M14 4L5 20" ${brown}/><path d="M1 1l2 3 2-3M1 18h4l-4 4h4" fill="none" stroke="#556"/>`,
            `<path d="M5 7l5 5M10 7l-5 5M10 1l2 3M13 6l4 5" ${brown}/><path d="M1 14h20v7H1z" fill="#d8cf62" stroke="#7b6a28"/><path d="M4 17v4M7 17v4M10 17v4M13 17v4" stroke="#7b6a28"/>`,
            'sep',
            '<path d="M1 5h13v9H1z" fill="#fbf79a" stroke="#7b6a28" stroke-width="1.500"/><path d="M14 10h5l-6 12M13 18v4h4" fill="none" stroke="#222"/>',
            '<path d="M1 3h13v13H1z" fill="#fbf79a" stroke="#7b6a28"/><circle cx="9" cy="10" r="5" fill="#ddd" stroke="#555"/><path d="M6 14l3-8 3 8M7 11h4M20 12l-7 10v-4" fill="none" stroke="#444"/>',
            `<path d="M1 3h11v5H1zM5 11h11v5H5zM12 5h6M16 14l3 7" ${gray}/>`,
            'sep',
            '<path d="M1 8h6v9h11v6H1z" fill="#ecd84e" stroke="#8a7420"/><path d="M13 1h8v8h-8z" fill="#8ee0d8" stroke="#366"/><path d="M14 9l-6 6M8 11v4h4" fill="none" stroke="#222"/>',
            '<path d="M1 8h6v9h11v6H1z" fill="#ecd84e" stroke="#8a7420"/><path d="M14 9l-6 6M8 11v4h4M13 4h8M17 1v8" fill="none" stroke="#222"/>',
            '<path d="M1 4l3-3h14v16H1z" fill="#f3d94a" stroke="#c07818"/><path d="M5 2h12v9H5z" fill="#7fe0dc"/><path d="M12 12h8v10h-8z" fill="#eee" stroke="#555"/>',
            '<path d="M1 7h5v13h-5z" fill="#8ee8e0"/><path d="M2 6h5v12h6V6h7" fill="none" stroke="#456"/>',
            `<path d="M2 6l8-4 6 14-3 4H2zM2 10h8v10" ${gray}/>`,
            `<path d="M6 3c7 0 10 6 10 16M4 7c6 0 9 4 9 12" ${gray}/>`,
            `<path d="M4 4h5l10 12M8 7l9 12" ${gray}/>`,
            'sep',
            '<path d="M2 12h9v9H2z" fill="#7fdce2" stroke="#255"/><path d="M2 12l9-8h11M11 12l9-8" fill="none" stroke="#222" stroke-dasharray="3 2"/>',
            '<path d="M11 1v22" stroke="#222" stroke-dasharray="4 2"/><circle cx="5" cy="12" r="4" fill="#cfe" stroke="#556"/><circle cx="18" cy="12" r="4" fill="#7cc" stroke="#556"/><path d="M5 7l14-4" stroke="#555" stroke-dasharray="3 2"/>',
            '<path d="M1 6l5-5 3 6 13 14H10z" fill="#cfd4da" stroke="#444"/><path d="M1 6l5-5 2 5-4 3z" fill="#59cfc8" stroke="#244"/>',
            '<path d="M1 19C4 8 8 4 15 2h7l-6 18c-3-5-9-4-15-1z" fill="#b8f0e8" stroke="#355"/><path d="M5 9c5-2 9 0 13 4M15 2c-4 5-5 10-5 15" fill="none" stroke="#355"/>',
            '<path d="M3 6c6-5 11 0 19-3v14c-8 3-12-2-19 3z" fill="#d5f5ee" stroke="#566"/>',
            'sep',
            `<path d="M11 1v21M2 4c6 0 7 5 7 14H2M20 4c-6 0-6 5-6 14h7" ${gray}/>`,
            `<circle cx="8" cy="13" r="6" ${gray}/><path d="M9 4h13v10H9z" ${gray}/>`,
            `<path d="M8 4h14v12C15 16 17 9 8 9z" ${gray}/>`,
            '<rect x="1" y="2" width="21" height="18" rx="2" fill="#e3ebf7" stroke="#8d99ad"/><path d="M5 7h12M5 11h12M5 15h12" stroke="#778" stroke-width="2" stroke-dasharray="2 3"/>',
        ];
        document.getElementById('featureBar').innerHTML = sep + features.map(f => f === 'sep' ? sep
            : `<button aria-label="Feature tool" class="flex h-[30px] shrink-0 items-center"><svg class="h-6 w-6" viewBox="0 0 24 24">${f}</svg></button>`).join('');
    </script>
</body>
</html>
